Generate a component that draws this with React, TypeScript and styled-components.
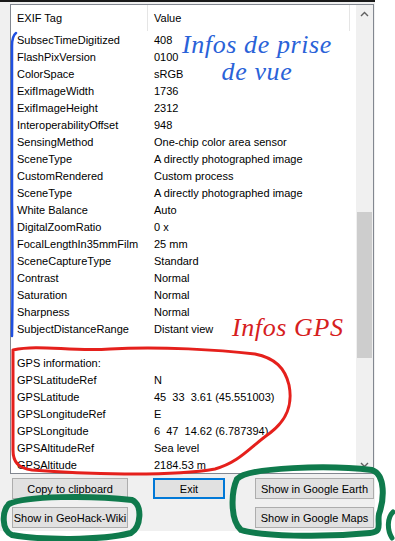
import React from "react";
import styled, { createGlobalStyle } from "styled-components";

const GlobalStyle = createGlobalStyle`
	html, body {
		margin: 0;
		padding: 0;
		background: #ffffff;
	}
	* {
		box-sizing: border-box;
	}
`;

const rows: [string, string][] = [
	["SubsecTimeDigitized", "408"],
	["FlashPixVersion", "0100"],
	["ColorSpace", "sRGB"],
	["ExifImageWidth", "1736"],
	["ExifImageHeight", "2312"],
	["InteroperabilityOffset", "948"],
	["SensingMethod", "One-chip color area sensor"],
	["SceneType", "A directly photographed image"],
	["CustomRendered", "Custom process"],
	["SceneType", "A directly photographed image"],
	["White Balance", "Auto"],
	["DigitalZoomRatio", "0 x"],
	["FocalLengthIn35mmFilm", "25 mm"],
	["SceneCaptureType", "Standard"],
	["Contrast", "Normal"],
	["Saturation", "Normal"],
	["Sharpness", "Normal"],
	["SubjectDistanceRange", "Distant view"],
	["", ""],
	["GPS information:", ""],
	["GPSLatitudeRef", "N"],
	["GPSLatitude", "45  33  3.61 (45.551003)"],
	["GPSLongitudeRef", "E"],
	["GPSLongitude", "6  47  14.62 (6.787394)"],
	["GPSAltitudeRef", "Sea level"],
	["GPSAltitude", "2184.53 m"],
];

const App = () => {
	return (
		<Page>
			<GlobalStyle />
			<Dialog>
				<ListView>
					<Table>
						<HeaderRow>
							<HeaderCell $width={137}>EXIF Tag</HeaderCell>
							<HeaderCell $width={202}>Value</HeaderCell>
						</HeaderRow>
						{rows.map(([tag, value], i) => (
							<Row key={i}>
								<Cell $width={137}>{tag}</Cell>
								<Cell $width={220}>{value}</Cell>
							</Row>
						))}
					</Table>
					<Scrollbar>
						<Arrow>
							<svg width="9" height="6" viewBox="0 0 9 6">
								<path d="M1 5 L4.5 1.5 L8 5" stroke="#606060" strokeWidth="1.4" fill="none" />
							</svg>
						</Arrow>
						<Track>
							<Thumb />
						</Track>
						<Arrow>
							<svg width="9" height="6" viewBox="0 0 9 6">
								<path d="M1 1 L4.5 4.5 L8 1" stroke="#606060" strokeWidth="1.4" fill="none" />
							</svg>
						</Arrow>
					</Scrollbar>
				</ListView>
				<ButtonGrid>
					<Button $width={116}>Copy to clipboard</Button>
					<Button $width={72} $focused>
						Exit
					</Button>
					<Button $width={119}>Show in Google Earth</Button>
					<Button $width={116}>Show in GeoHack-Wiki</Button>
					<span />
					<Button $width={119}>Show in Google Maps</Button>
				</ButtonGrid>
			</Dialog>

			<Scribbles width="395" height="541" viewBox="0 0 395 541">
				<path
					d="M16,33 Q12,36 12,46 L12,200 Q13,280 12,336"
					stroke="#1f4fe0"
					strokeWidth="2.5"
					fill="none"
					strokeLinecap="round"
				/>
				<path
					d="M13,350 C40,344 70,352 110,349 C160,346 220,350 255,354 C275,358 285,368 289,385 C293,405 287,420 270,433 C250,447 240,462 215,469 C170,477 80,474 32,470 C18,468 13,462 13,450 L13,362 C13,356 13,352 13,350"
					stroke="#e5201c"
					strokeWidth="3"
					fill="none"
					strokeLinecap="round"
				/>
				<path
					d="M9,504 C25,496 90,495 132,500 C143,505 141,527 131,533 C100,541 40,540 12,535 C1,530 2,511 9,504"
					stroke="#0f7a4c"
					strokeWidth="6"
					fill="none"
					strokeLinecap="round"
				/>
				<path
					d="M237,479 C248,467 330,465 372,470 C386,475 384,500 379,514 C377,524 383,532 370,533 C320,538 260,536 241,530 C230,520 231,492 237,479"
					stroke="#0f7a4c"
					strokeWidth="6"
					fill="none"
					strokeLinecap="round"
				/>
				<path
					d="M393,512 C387,518 387,530 392,538"
					stroke="#0f7a4c"
					strokeWidth="5"
					fill="none"
					strokeLinecap="round"
				/>
			</Scribbles>
			<Note $top={31} $left={182} $color="#2a62d8">
				Infos de prise
				<br />
				de vue
			</Note>
			<Note $top={314} $left={232} $color="#d6201e">
				Infos GPS
			</Note>
		</Page>
	);
};

export default App;

const Page = styled.div`
	position: relative;
	width: 395px;
	height: 541px;
	overflow: hidden;
	background: #ffffff;
	font-family: "Liberation Sans", Arial, sans-serif;
	font-size: 11px;
	color: #000000;
`;

const Dialog = styled.div`
	width: 375px;
	height: 531px;
	background: #f0f0f0;
	border-top: 2px solid #1a1a1a;
	padding: 2px 1px 0 10px;
	display: flex;
	flex-direction: column;
`;

const ListView = styled.div`
	width: 364px;
	height: 470px;
	border: 1px solid #828790;
	background: #ffffff;
	display: flex;
	overflow: hidden;
`;

const Table = styled.div`
	flex: 1;
	display: flex;
	flex-direction: column;
	overflow: hidden;
`;

const HeaderRow = styled.div`
	height: 26px;
	display: flex;
	flex-shrink: 0;
`;

const HeaderCell = styled.div<{ $width: number }>`
	width: ${(p) => p.$width}px;
	flex-shrink: 0;
	padding: 7px 0 0 6px;
	border-right: 1px solid #e5e5e5;
`;

const Row = styled.div`
	height: 17px;
	display: flex;
	flex-shrink: 0;
	align-items: center;
`;

const Cell = styled.div<{ $width: number }>`
	width: ${(p) => p.$width}px;
	flex-shrink: 0;
	padding-left: 6px;
	white-space: pre;
	overflow: hidden;
`;

const Scrollbar = styled.div`
	width: 17px;
	background: #f0f0f0;
	display: flex;
	flex-direction: column;
`;

const Arrow = styled.div`
	height: 17px;
	display: flex;
	align-items: center;
	justify-content: center;
`;

const Track = styled.div`
	flex: 1;
	position: relative;
`;

const Thumb = styled.div`
	position: absolute;
	left: 1px;
	right: 1px;
	top: 190px;
	height: 146px;
	background: #cdcdcd;
`;

const ButtonGrid = styled.div`
	display: grid;
	grid-template-columns: 141px 102px 119px;
	grid-auto-rows: 21px;
	row-gap: 8px;
	margin: 4px 0 0 2px;
`;

const Button = styled.div<{ $width: number; $focused?: boolean }>`
	width: ${(p) => p.$width}px;
	height: 21px;
	background: #e1e1e1;
	border: ${(p) => (p.$focused ? "2px solid #0078d7" : "1px solid #adadad")};
	display: flex;
	align-items: center;
	justify-content: center;
	white-space: nowrap;
`;

const Scribbles = styled.svg`
	position: absolute;
	left: 0;
	top: 0;
	pointer-events: none;
`;

const Note = styled.div<{ $top: number; $left: number; $color: string }>`
	position: absolute;
	top: ${(p) => p.$top}px;
	left: ${(p) => p.$left}px;
	color: ${(p) => p.$color};
	font-family: "Liberation Serif", "DejaVu Serif", serif;
	font-style: italic;
	font-size: 26px;
	line-height: 27px;
	text-align: center;
	letter-spacing: 0.6px;
	pointer-events: none;
`;
